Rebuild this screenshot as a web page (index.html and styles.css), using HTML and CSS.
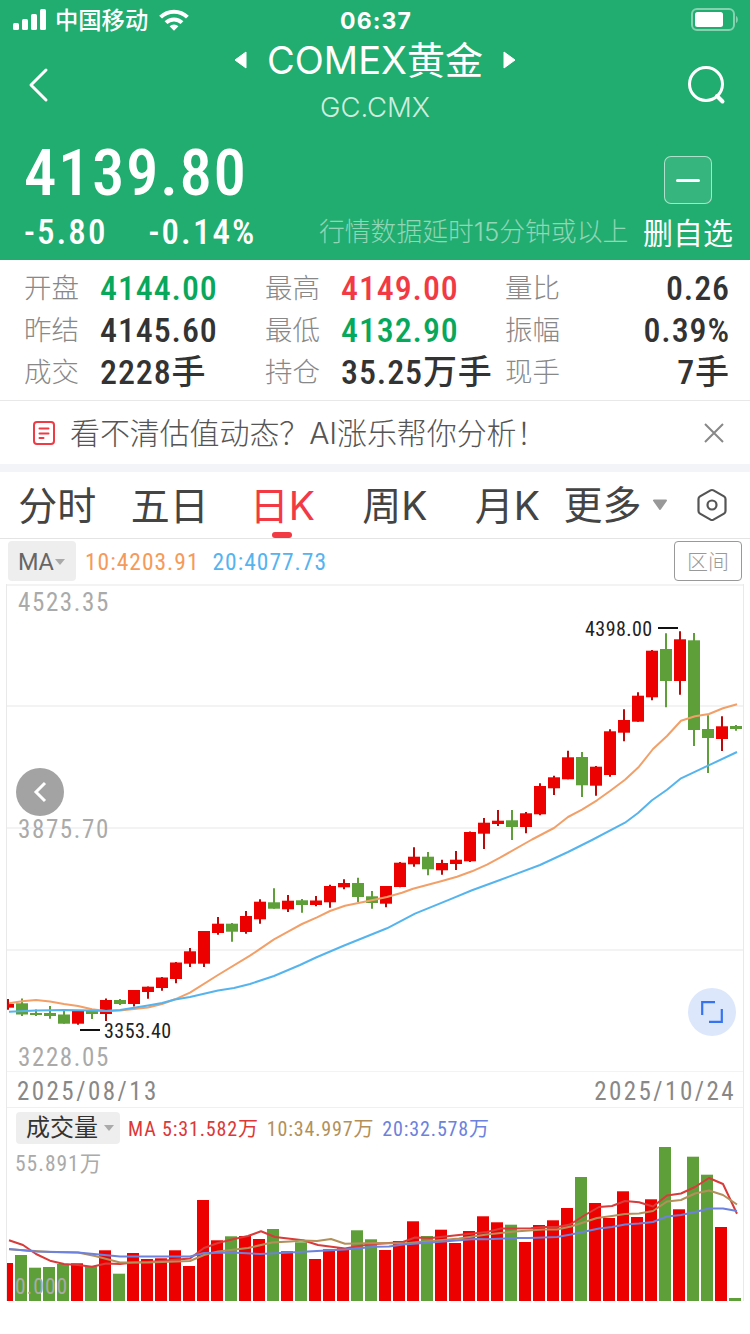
FILE: index.html
```html
<!DOCTYPE html>
<html lang="zh-CN">
<head>
    <meta charset="UTF-8">
    <meta name="viewport" content="width=device-width, initial-scale=1.0">
    <title>COMEX黄金 GC.CMX</title>
    <link rel="stylesheet" href="styles.css">
</head>
<body>
    <header class="header">
        <div class="status-bar">
            <div class="carrier">
                <svg width="34" height="22" viewBox="0 0 34 22" fill="#fff">
                    <rect x="0" y="14" width="6" height="7" rx="1.5"/>
                    <rect x="9" y="10" width="6" height="11" rx="1.5"/>
                    <rect x="18" y="5" width="6" height="16" rx="1.5"/>
                    <rect x="27" y="0" width="6" height="21" rx="1.5"/>
                </svg>
                <span>中国移动</span>
                <svg class="wifi" width="30" height="22" viewBox="0 0 30 22">
                    <g fill="none" stroke="#fff" stroke-width="4">
                        <path d="M1.6 8.2a19 19 0 0 1 26.8 0"/>
                        <path d="M7 13.7a11.3 11.3 0 0 1 16 0"/>
                    </g>
                    <path fill="#fff" d="M10.6 17.3a6.2 6.2 0 0 1 8.8 0L15 21.8z"/>
                </svg>
            </div>
            <span class="time">06:37</span>
            <svg class="battery" width="50" height="24" viewBox="0 0 50 24">
                <rect x="1" y="1" width="42" height="21" rx="5" fill="none" stroke="#fff" stroke-opacity=".45" stroke-width="2"/>
                <rect x="4" y="4" width="28" height="15" rx="2.5" fill="#fff"/>
                <path d="M45 8c2.5 1 2.500 6 0 7z" fill="#fff" fill-opacity=".45"/>
            </svg>
        </div>

        <div class="nav">
            <svg class="back" width="22" height="36" viewBox="0 0 22 36">
                <path d="M19 3 4 18l15 15" fill="none" stroke="#fff" stroke-width="3" stroke-linecap="round" stroke-linejoin="round"/>
            </svg>
            <div class="titles">
                <h1>
                    <svg width="13" height="20" viewBox="0 0 13 20"><path d="M12 2v16L1 10z" fill="#fff" stroke="#fff" stroke-linejoin="round"/></svg>
                    <span>COMEX黄金</span>
                    <svg width="13" height="20" viewBox="0 0 13 20"><path d="M1 2v16l11-8z" fill="#fff" stroke="#fff" stroke-linejoin="round"/></svg>
                </h1>
                <p>GC.CMX</p>
            </div>
            <svg class="search" width="40" height="40" viewBox="0 0 40 40" fill="none" stroke="#fff">
                <circle cx="20" cy="19" r="16.500" stroke-width="3"/>
                <path d="m31 31 5.500 5.500" stroke-width="4" stroke-linecap="round"/>
            </svg>
        </div>

        <div class="quote">
            <div class="quote-left">
                <div class="price">4139.80</div>
                <div class="change"><span>-5.80</span><span>-0.14%</span></div>
            </div>
            <p class="delay">行情数据延时15分钟或以上</p>
            <div class="watch">
                <div class="watch-icon"><i></i></div>
                <span>删自选</span>
            </div>
        </div>
    </header>

    <section class="stats">
        <div><label>开盘</label><b class="green">4144.00</b></div>
        <div><label>最高</label><b class="red">4149.00</b></div>
        <div class="last"><label>量比</label><b>0.26</b></div>
        <div><label>昨结</label><b>4145.60</b></div>
        <div><label>最低</label><b class="green">4132.90</b></div>
        <div class="last"><label>振幅</label><b>0.39%</b></div>
        <div><label>成交</label><b>2228手</b></div>
        <div><label>持仓</label><b>35.25万手</b></div>
        <div class="last"><label>现手</label><b>7手</b></div>
    </section>

    <section class="notice">
        <svg width="22" height="24" viewBox="0 0 22 24" fill="none" stroke="#ee3b46" stroke-width="2" stroke-linecap="round">
            <rect x="1" y="1" width="20" height="22" rx="3"/>
            <path d="M6.500 7.500h9M6.500 12.500h9M6.500 17h4"/>
        </svg>
        <p>看不清估值动态？AI涨乐帮你分析！</p>
        <svg width="20" height="20" viewBox="0 0 20 20" stroke="#888" stroke-width="2">
            <path d="m1 1 18 18M19 1 1 19"/>
        </svg>
    </section>

    <nav class="tabs">
        <span>分时</span>
        <span>五日</span>
        <span class="active">日K</span>
        <span>周K</span>
        <span>月K</span>
        <span class="more">更多<svg width="16" height="12" viewBox="0 0 16 12"><path d="M2 1.500h12L8 10z" fill="#999" stroke="#999" stroke-width="2" stroke-linejoin="round"/></svg></span>
        <svg class="setting" width="32" height="34" viewBox="0 0 32 34" fill="none" stroke="#555" stroke-width="2.200" stroke-linejoin="round">
            <path d="M14.500 2.400q1.500-.8 3 0l10.500 6q1.500.9 1.500 2.600v12q0 1.700-1.500 2.600l-10.500 6q-1.500.8-3 0l-10.500-6q-1.500-.9-1.500-2.600V11q0-1.700 1.500-2.600z"/>
            <circle cx="16" cy="17" r="4.500"/>
        </svg>
    </nav>

    <div class="ma-bar">
        <span class="picker">MA<svg width="10" height="7" viewBox="0 0 10 7"><path d="M0 0h10L5 6z" fill="#aaa"/></svg></span>
        <span class="ma10">10:4203.91</span>
        <span class="ma20">20:4077.73</span>
        <span class="range">区间</span>
    </div>

    <main class="chart">
        <svg id="kline" class="kline" width="736" height="488" viewBox="7 584 736 488"></svg>
        <div class="dates"><span>2025/08/13</span><span>2025/10/24</span></div>
        <div class="vol-bar">
            <span class="vol-picker">成交量<svg width="10" height="7" viewBox="0 0 10 7"><path d="M0 0h10L5 6z" fill="#aaa"/></svg></span>
            <span class="vol5">MA 5:31.582万</span>
            <span class="vol10">10:34.997万</span>
            <span class="vol20">20:32.578万</span>
        </div>
        <svg id="volume" class="volume" width="736" height="157" viewBox="7 1144 736 157"></svg>

        <div class="collapse">
            <svg width="14" height="22" viewBox="0 0 14 22"><path d="m12 2-9 9 9 9" fill="none" stroke="#fff" stroke-width="3"/></svg>
        </div>
        <div class="expand">
            <svg width="22" height="22" viewBox="0 0 22 22"><path d="M1.200 14V1.200H14M20.800 8v12.800H8" fill="none" stroke="#3573f0" stroke-width="2.200"/></svg>
        </div>
    </main>

    <script src="chart.js"></script>
</body>
</html>
```
FILE: styles.css
```css
* {
    box-sizing: border-box;
    margin: 0;
    padding: 0;
}
body {
    width: 750px;
    height: 1334px;
    overflow: hidden;
    background: #fff;
    color: #333;
    font-family: Inter, "Noto Sans CJK SC", sans-serif;
}
svg {
    display: block;
    flex: none;
}

/* header */
.header {
    height: 260px;
    background: #21ad70;
    color: #fff;
}
.status-bar {
    height: 40px;
    display: grid;
    grid-template-columns: 1fr auto 1fr;
    align-items: center;
    padding: 0 11px 0 13px;
}
.carrier {
    display: flex;
    align-items: center;
    font-size: 23.3px;
    line-height: 38px;
    font-weight: 500;
}
.carrier span {
    margin: 2px 11px 0 8px;
}
.time {
    margin-top: 1px;
    font-size: 23px;
    font-weight: 700;
    letter-spacing: 1.1px;
}
.battery {
    justify-self: end;
    margin-right: -2px;
}
.nav {
    height: 90px;
    display: grid;
    grid-template-columns: 60px 1fr 60px;
    grid-template-rows: 90px;
    align-items: center;
    padding: 0 24px 0 27px;
}
.titles {
    height: 90px;
    text-align: center;
    margin: 0 -4px 0 -7px;
}
.titles h1 {
    display: flex;
    align-items: center;
    justify-content: center;
    gap: 20px;
    font-size: 38px;
    font-weight: 400;
    line-height: 40px;
}
.titles p {
    font-size: 27.5px;
    font-weight: 300;
    line-height: 54px;
    color: rgba(255, 255, 255, 0.8);
}
.search {
    justify-self: end;
}
.quote {
    height: 130px;
    display: flex;
    padding: 0 17px 0 24px;
}
.quote-left {
    width: 295px;
    font-family: Roboto, "Noto Sans CJK SC", sans-serif;
    font-stretch: 87.5%;
    font-weight: 460;
}
.price {
    font-size: 65px;
    line-height: 86px;
    letter-spacing: 1.5px;
}
.change {
    display: flex;
    gap: 41px;
    font-size: 35px;
    line-height: 34px;
    letter-spacing: 2.1px;
}
.delay {
    width: 324px;
    padding-top: 82px;
    font-size: 25.8px;
    font-weight: 300;
    line-height: 40px;
    white-space: nowrap;
    color: rgba(255, 255, 255, 0.5);
}
.watch {
    width: 90px;
    padding-top: 26px;
    font-size: 30px;
    line-height: 59px;
    white-space: nowrap;
}
.watch-icon {
    width: 48px;
    height: 48px;
    margin-left: 21px;
    display: flex;
    align-items: center;
    justify-content: center;
    border: 1px solid rgba(255, 255, 255, 0.6);
    border-radius: 7px;
    background: rgba(255, 255, 255, 0.1);
}
.watch-icon i {
    width: 24px;
    height: 3px;
    border-radius: 2px;
    background: #fff;
}

/* quote details */
.stats {
    height: 141px;
    display: grid;
    grid-template-columns: 241px 240px 1fr;
    grid-auto-rows: 42px;
    padding: 7px 20px 0 24px;
    border-bottom: 1px solid #e8e8e8;
}
.stats div {
    display: flex;
    align-items: center;
    white-space: nowrap;
    line-height: 42px;
}
.stats label {
    width: 76px;
    font-size: 27.5px;
    font-weight: 300;
    color: #888;
}
.stats b {
    font-family: Roboto, "Noto Sans CJK SC", sans-serif;
    font-stretch: 87.5%;
    font-size: 34px;
    font-weight: 500;
    line-height: 44px;
    letter-spacing: 0.9px;
}
.stats .last {
    justify-content: space-between;
}
.stats .green {
    color: #07a85c;
}
.stats .red {
    color: #f23a45;
}
.notice {
    height: 71px;
    display: flex;
    align-items: center;
    padding: 0 26px 0 33px;
    border-bottom: 8px solid #f3f4f8;
}
.notice p {
    flex: 1;
    margin-left: 15px;
    font-size: 30px;
    font-weight: 300;
    line-height: 60px;
    letter-spacing: -0.1px;
    color: #555;
}

/* period tabs */
.tabs {
    height: 67px;
    display: grid;
    grid-template-columns: repeat(5, 112.5px) 132px 32px;
    align-items: center;
    padding-left: 1px;
    border-bottom: 1px solid #e4e4e4;
    font-size: 39px;
    line-height: 68px;
    text-align: center;
    color: #444;
}
.tabs span {
    height: 66px;
}
.tabs .active {
    color: #f23a45;
}
.tabs .active::after {
    content: "";
    display: block;
    width: 20px;
    height: 6px;
    margin: -8px auto 0;
    border-radius: 3px;
    background: #f23a45;
}
.tabs .more {
    display: flex;
    align-items: center;
    gap: 10px;
}

/* chart */
.ma-bar {
    height: 45px;
    display: flex;
    align-items: center;
    padding: 0 8px 1px;
    font-family: Roboto, sans-serif;
    font-stretch: 87.5%;
    font-size: 23.5px;
    line-height: 40px;
    letter-spacing: 1px;
}
.picker {
    width: 68px;
    height: 40px;
    display: flex;
    align-items: center;
    gap: 2px;
    padding: 2px 0 0 10px;
    border-radius: 4px;
    background: #eee;
    color: #666;
    font-stretch: 100%;
    letter-spacing: -0.3px;
}
.ma10 {
    margin: 2px 13px 0 9px;
    color: #f59a5b;
}
.ma20 {
    margin-top: 2px;
    color: #55b4f0;
}
.range {
    width: 68px;
    height: 40px;
    margin-left: auto;
    border: 1px solid #999;
    border-radius: 4px;
    font-family: "Noto Sans CJK SC", sans-serif;
    font-size: 21px;
    font-weight: 300;
    line-height: 37px;
    letter-spacing: 0;
    text-align: center;
    color: #999;
}
.chart {
    position: relative;
    width: 738px;
    height: 717px;
    margin-left: 6px;
    border: solid #e9e9e9;
    border-width: 0 1px;
    font-family: Roboto, "Noto Sans CJK SC", sans-serif;
    font-stretch: 87.5%;
}
.dates {
    height: 36px;
    display: flex;
    justify-content: space-between;
    padding: 0 7px 0 10px;
    border-bottom: 1px solid #f0f0f0;
    font-size: 25px;
    line-height: 40px;
    letter-spacing: 2.45px;
    color: #888;
}
.vol-bar {
    height: 36px;
    display: flex;
    align-items: center;
    padding: 4px 0 0 9px;
    font-size: 20px;
    line-height: 34px;
    letter-spacing: 0.85px;
    white-space: nowrap;
}
.vol-picker {
    width: 104px;
    height: 32px;
    display: flex;
    align-items: center;
    gap: 6px;
    padding-left: 10px;
    margin-right: 8px;
    border-radius: 4px;
    background: #eee;
    font-size: 24px;
    letter-spacing: 0;
    color: #333;
}
.vol5,
.vol10,
.vol20 {
    padding-top: 2px;
}
.vol5 {
    color: #dc3838;
}
.vol10 {
    margin: 0 8px;
    color: #b3905a;
}
.vol20 {
    color: #6c82dc;
}
.collapse,
.expand {
    position: absolute;
    width: 48px;
    height: 48px;
    display: flex;
    align-items: center;
    justify-content: center;
    border-radius: 50%;
}
.collapse {
    left: 9px;
    top: 184px;
    background: #a3a3a3;
}
.expand {
    right: 7px;
    top: 404px;
    background: #dde7fc;
}
.grid {
    stroke: #f3f3f3;
    stroke-width: 2;
}
.up {
    fill: #ec0000;
    stroke: #ec0000;
}
.down {
    fill: #5f9f3a;
    stroke: #5f9f3a;
}
.body {
    stroke: none;
}
.up.wick {
    stroke: #b80c0c;
}
.wick {
    stroke-width: 2;
}
.line {
    fill: none;
    stroke-width: 2;
    stroke-linejoin: round;
}
.axis {
    font-size: 25px;
    letter-spacing: 1.6px;
    fill: #aaa;
}
.axis-small {
    font-size: 21.5px;
    letter-spacing: 1px;
    fill: #aaa;
}
.mark {
    font-size: 20px;
    letter-spacing: 0.45px;
    fill: #222;
}
.tick {
    stroke: #111;
    stroke-width: 2;
}
```
FILE: chart.js
```js
const STEP = 14;
const BAR_WIDTH = 12;
const VOLUME_BASE = 1301;

// direction, body top, body bottom, high, low, volume top
const candles = [
    ['up', 1004, 1007.7, 999, 1009.7, 1263],
    ['down', 1003.3, 1014.5, 998.5, 1016, 1255],
    ['down', 1013, 1015, 1009.5, 1016, 1267.7],
    ['down', 1013, 1016, 1006, 1018.7, 1267],
    ['down', 1014.5, 1023.7, 1011, 1023.7, 1264],
    ['up', 1011, 1023.7, 1011, 1024.7, 1263.3],
    ['down', 1010.5, 1014, 1010.5, 1019, 1266.3],
    ['up', 1000, 1014, 998.5, 1021, 1250.3],
    ['down', 1000, 1004, 999, 1005, 1273.7],
    ['up', 990, 1004, 990, 1006.5, 1253],
    ['up', 986.7, 992, 986.5, 998.7, 1259],
    ['up', 977.5, 988, 977, 990.7, 1258.3],
    ['up', 962.5, 979, 962, 983.3, 1250.3],
    ['up', 951.3, 963.7, 948, 967, 1266],
    ['up', 931, 963.7, 931, 967, 1200],
    ['up', 923.7, 933, 917, 934.7, 1240.3],
    ['down', 923.7, 931.7, 923, 941.7, 1236.3],
    ['up', 916, 932, 911, 933.7, 1236],
    ['up', 901.7, 919.3, 899.3, 923.7, 1239],
    ['down', 902.3, 908.7, 888.3, 908.7, 1229],
    ['up', 900.7, 909.3, 895, 912, 1251.3],
    ['down', 900.3, 905, 899, 912.7, 1242.3],
    ['up', 900.5, 905, 896, 906.3, 1259],
    ['up', 886, 902.3, 884.7, 907.7, 1249.3],
    ['up', 883, 887.3, 879.3, 889.3, 1248.3],
    ['down', 883, 897, 877.7, 902, 1230.3],
    ['down', 896.3, 903, 891, 908.7, 1239.3],
    ['up', 886, 903.7, 886, 907.3, 1250],
    ['up', 862.7, 887, 862, 887.3, 1241],
    ['up', 856.7, 864.3, 847.3, 866.7, 1221.3],
    ['down', 856.7, 869.3, 852, 875.3, 1236],
    ['up', 863, 870.3, 859.7, 874.7, 1229.7],
    ['up', 859.7, 864, 851, 870, 1243],
    ['up', 832, 861.3, 831.5, 862, 1231],
    ['up', 822.7, 833.7, 818, 849, 1216.3],
    ['up', 820.7, 824, 810, 826, 1222.3],
    ['down', 820.3, 827, 810, 840, 1224.7],
    ['up', 813.3, 827, 812, 833.3, 1242],
    ['up', 786, 814.3, 783.3, 815.3, 1225],
    ['up', 777.3, 788.3, 775.7, 795, 1220.3],
    ['up', 757.3, 779.3, 750.7, 779.3, 1208],
    ['down', 757, 785.3, 752, 797, 1177],
    ['up', 766.7, 785.7, 766, 795.7, 1203],
    ['up', 731.3, 775, 729.3, 776.7, 1218],
    ['up', 720, 732.7, 709.3, 741.3, 1191.3],
    ['up', 695.7, 721.7, 692.3, 721.7, 1217],
    ['up', 650.7, 697.3, 650, 700.3, 1199.3],
    ['down', 649, 681, 633.3, 707.3, 1147],
    ['up', 639.3, 681, 631.3, 694.7, 1209.3],
    ['down', 640.3, 730, 633, 746, 1156.7],
    ['down', 729, 738, 715.3, 773, 1174.7],
    ['up', 726.3, 739, 716.3, 751, 1227],
    ['down', 726, 729, 725, 730.7, 1298]
];

const ma10 = '9,1003.3 22,1001.3 36,1000 50,1001.5 64,1004 78,1006 92,1009.3 106,1011 120,1010.5 134,1009 148,1007.5 162,1004 175,999.3 190,992.7 218,975 250,955.7 274,939.3 289,931 302,924 317,917.3 330,911 345,905.7 367,901.3 387,897 402,892.7 413,888.7 442,881 457,876.7 472,871.3 487,864.7 500,857.7 532,839.5 554,828 568,817 582,809.7 597,800.3 610,791 625,779.7 639,766.7 653,749 667,736 681,720.7 695,716.3 709,714 723,708.3 737,704.3';
const ma20 = '9,1011.7 36,1010.5 64,1010 92,1010.5 106,1011 120,1010 148,1005.5 162,1003 175,999.5 190,997 218,990.5 234,988 250,984 274,976 300,965 316,957.5 343,946 387,928.3 415,913.7 450,899.3 472,890.3 500,880 540,865 568,852 592,840 625,822.7 638,813 652,800.3 667,789.7 681,778.3 708,765.7 737,752';

const vol5 = '9,1240.3 23,1245 36,1254 50,1260.7 64,1264 78,1265 92,1266.7 106,1263.5 120,1264 134,1262.5 148,1262 190,1258.5 204,1248 218,1243 234,1239 248,1236 261,1231.3 275,1237 303,1240.3 318,1245 345,1248.5 362,1245.5 375,1244 403,1242 415,1237.5 431,1238 459,1235 473,1233.5 487,1232 501,1228.5 531,1228.3 543,1227 557,1227 570,1224.5 585,1215 599,1207 612,1206 625,1201 639,1202.3 653,1206.5 667,1195.5 681,1193.5 695,1187 709,1178 723,1184 737,1213.7';
const vol10 = '9,1249.3 50,1252 78,1252.5 95,1256 120,1262.5 148,1262.5 176,1261.5 190,1261 204,1255 218,1251.5 248,1248 272,1242.5 290,1241.5 303,1240.5 317,1241 331,1239 345,1243.7 375,1243 403,1243.5 431,1241 459,1238.5 487,1234.5 515,1231.5 543,1229.5 557,1229.5 571,1226.5 597,1218 612,1216 625,1214 639,1213.5 653,1211 667,1201.5 681,1200 695,1193.5 709,1190.5 723,1195 737,1204.5';
const vol20 = '9,1249 36,1251.5 78,1252.5 120,1256.5 190,1256.5 204,1253 232,1252.5 260,1254 290,1252.5 317,1251 345,1249.5 362,1248 375,1246.7 389,1246.5 403,1244.5 431,1242.5 475,1239 487,1239.3 515,1238 529,1238 557,1237 571,1234.5 599,1228.5 612,1227 625,1224.5 639,1223.5 653,1222 667,1216.5 681,1215 695,1212 709,1208.5 723,1208.5 737,1211';

function polyline(points, color) {
    return `<polyline class="line" points="${points}" stroke="${color}"/>`;
}

function text(cls, x, y, value) {
    return `<text class="${cls}" x="${x}" y="${y}">${value}</text>`;
}

function drawKline() {
    let html = '';
    [585, 706, 828, 950, 1072].forEach(y => {
        html += `<path class="grid" d="M7 ${y}H743"/>`;
    });
    html += text('axis', 18, 611, '4523.35');
    html += text('axis', 18, 838, '3875.70');
    html += text('axis', 18, 1066, '3228.05');

    candles.forEach(([dir, top, bottom, high, low], i) => {
        const x = 8 + i * STEP;
        html += `<path class="${dir} wick" d="M${x} ${high}V${low}"/>`;
        html += `<rect class="${dir} body" x="${x - BAR_WIDTH / 2}" y="${top}" width="${BAR_WIDTH}" height="${bottom - top}"/>`;
    });

    html += polyline(ma10, '#f2a068');
    html += polyline(ma20, '#55b4ee');

    // highest and lowest price marks
    html += '<path class="tick" d="M658 628h20M80 1030h20"/>';
    html += text('mark', 585, 636, '4398.00');
    html += text('mark', 104, 1038, '3353.40');
    document.getElementById('kline').innerHTML = html;
}

function drawVolume() {
    let html = text('axis-small', 15, 1171, '55.891万');
    candles.forEach(([dir, , , , , top], i) => {
        const x = 7 + i * STEP - BAR_WIDTH / 2;
        html += `<rect class="${dir} body" x="${x}" y="${top}" width="${BAR_WIDTH}" height="${VOLUME_BASE - top}"/>`;
    });
    html += polyline(vol5, '#d93a3a');
    html += polyline(vol10, '#b3905a');
    html += polyline(vol20, '#6c82dc');
    html += text('axis-small', 15, 1294, '0.000');
    document.getElementById('volume').innerHTML = html;
}

drawKline();
drawVolume();
```
